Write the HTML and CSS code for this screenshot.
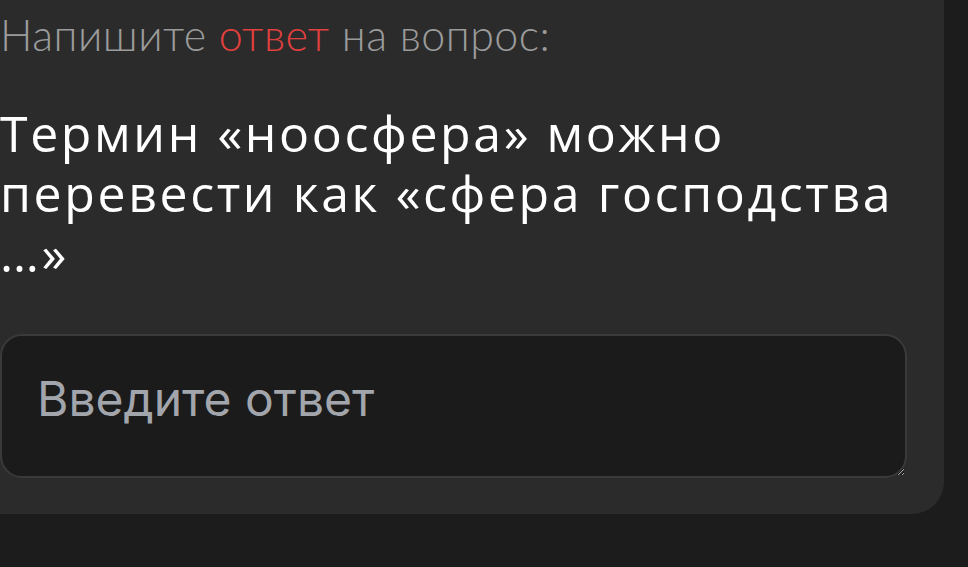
FILE: index.html
```html
<!DOCTYPE html>
<html lang="ru">
<head>
<meta charset="utf-8">
<link rel="stylesheet" href="styles.css">
</head>
<body>
<div class="card">
  <p class="label">Напишите <span class="accent">ответ</span> на вопрос:</p>
  <p class="question">Термин «ноосфера» можно перевести как «сфера господства …»</p>
  <textarea class="answer" placeholder="Введите ответ"></textarea>
</div>
</body>
</html>
```
FILE: styles.css
```css
html, body {
  margin: 0;
  padding: 0;
  background: #1c1c1c;
  overflow: hidden;
}
body {
  width: 968px;
  height: 567px;
}
.card {
  box-sizing: border-box;
  width: 944px;
  margin-top: -30px;
  padding: 40px 37px 36px 0;
  background: #2b2b2b;
  border-radius: 0 32px 32px 0;
  display: flex;
  flex-direction: column;
}
.label {
  margin: 0;
  font-family: "Lato", "Open Sans", sans-serif;
  font-weight: 300;
  font-size: 43px;
  line-height: 50px;
  letter-spacing: 0.5px;
  color: #9b9b9b;
}
.accent {
  color: #e2403f;
}
.question {
  margin: 43px 0 0 0;
  font-family: "Open Sans", "Noto Sans", sans-serif;
  font-weight: 400;
  font-size: 50px;
  line-height: 60px;
  letter-spacing: 2.6px;
  color: #ffffff;
}
.answer {
  box-sizing: border-box;
  margin-top: 51px;
  width: 100%;
  height: 144px;
  padding: 35px 35px;
  background: #1b1b1b;
  border: 2px solid #3a3a3a;
  border-radius: 22px;
  font-family: "Inter", "Roboto", sans-serif;
  font-size: 48px;
  line-height: 56px;
  color: #ffffff;
  outline: none;
  resize: vertical;
}
.answer::placeholder {
  color: #a2a6ac;
  opacity: 1;
}
```
